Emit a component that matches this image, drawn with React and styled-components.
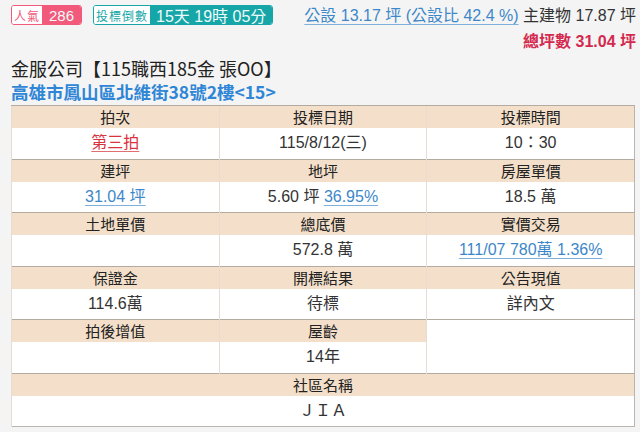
import React from 'react';
import styled, { createGlobalStyle } from "styled-components"

const GlobalStyle = createGlobalStyle`
  html, body {
    margin: 0;
    padding: 0;
    background: #f4f4f4;
  }
  body {
    font-family: "Liberation Sans", "Noto Sans CJK TC", sans-serif;
    color: #333;
  }
`

const rows = [
  {
    heads: ["拍次", "投標日期", "投標時間"],
    values: [{ text: "第三拍", tone: "red" }, { text: "115/8/12(三)" }, { text: "10：30" }],
  },
  {
    heads: ["建坪", "地坪", "房屋單價"],
    values: [
      { text: "31.04 坪", tone: "blue" },
      { text: "5.60 坪 ", link: "36.95%" },
      { text: "18.5 萬" },
    ],
  },
  {
    heads: ["土地單價", "總底價", "實價交易"],
    values: [{ text: "" }, { text: "572.8 萬" }, { text: "111/07 780萬 1.36%", tone: "blue" }],
  },
  {
    heads: ["保證金", "開標結果", "公告現值"],
    values: [{ text: "114.6萬" }, { text: "待標" }, { text: "詳內文" }],
  },
]

function Value({ cell }) {
  if (cell.tone) return <Link tone={cell.tone}>{cell.text}</Link>
  return (
    <>
      {cell.text}
      {cell.link && <Link tone="blue">{cell.link}</Link>}
    </>
  )
}

function App() {
  return (
    <Page>
      <GlobalStyle />
      <TopBar>
        <Badges>
          <Badge color="#f25a7c">
            <BadgeLabel color="#f25a7c">人氣</BadgeLabel>
            <BadgeValue color="#f25a7c">286</BadgeValue>
          </Badge>
          <Badge color="#16a6a8">
            <BadgeLabel color="#16a6a8">投標倒數</BadgeLabel>
            <BadgeValue color="#16a6a8" big>15天 19時 05分</BadgeValue>
          </Badge>
        </Badges>
        <AreaInfo>
          <AreaLine>
            <Link tone="blue">公設 13.17 坪 (公設比 42.4 %)</Link> 主建物 17.87 坪
          </AreaLine>
          <TotalLine>總坪數 31.04 坪</TotalLine>
        </AreaInfo>
      </TopBar>

      <Title>金服公司【115職西185金 張OO】</Title>
      <Address>高雄市鳳山區北維街38號2樓&lt;15&gt;</Address>

      <Table>
        <tbody>
          {rows.map((row, key) => (
            <React.Fragment key={key}>
              <tr>
                {row.heads.map((h) => <HeadCell key={h}>{h}</HeadCell>)}
              </tr>
              <tr>
                {row.values.map((v, i) => (
                  <ValueCell key={i}><Value cell={v} /></ValueCell>
                ))}
              </tr>
            </React.Fragment>
          ))}
          <tr>
            <HeadCell>拍後增值</HeadCell>
            <HeadCell>屋齡</HeadCell>
            <EmptyCell rowSpan={2} />
          </tr>
          <tr>
            <ValueCell></ValueCell>
            <ValueCell>14年</ValueCell>
          </tr>
          <tr>
            <HeadCell colSpan={3}>社區名稱</HeadCell>
          </tr>
          <tr>
            <ValueCell colSpan={3}>ＪＩＡ</ValueCell>
          </tr>
        </tbody>
      </Table>
    </Page>
  );
}

export default App;

const Page = styled.div`
  width: 640px;
  height: 432px;
  padding: 5px 4px 0 11px;
  box-sizing: border-box;
  overflow: hidden;
`

const TopBar = styled.div`
  display: flex;
  justify-content: space-between;
  align-items: flex-start;
`

const Badges = styled.div`
  display: flex;
  gap: 11px;
`

const Badge = styled.div`
  display: flex;
  align-items: stretch;
  height: 20px;
  border: 1px solid ${(p) => p.color};
  border-radius: 3px;
  overflow: hidden;
  box-sizing: border-box;
`

const BadgeLabel = styled.span`
  display: flex;
  align-items: center;
  padding: 0 2px;
  background: #fff;
  color: ${(p) => p.color};
  font-size: 12px;
  font-family: "Noto Sans CJK TC", sans-serif;
  letter-spacing: 1px;
`

const BadgeValue = styled.span`
  display: flex;
  align-items: center;
  padding: 0 ${(p) => (p.big ? "6px" : "7px")};
  background: ${(p) => p.color};
  color: #eefafa;
  font-size: ${(p) => (p.big ? "16px" : "15px")};
  font-family: "Liberation Sans", "Noto Sans CJK TC", sans-serif;
`

const AreaInfo = styled.div`
  display: flex;
  flex-direction: column;
  align-items: flex-end;
  font-size: 16px;
  line-height: 20px;
  padding-top: 1px;
`

const AreaLine = styled.div`
  color: #333;
  white-space: nowrap;
`

const TotalLine = styled.div`
  color: #d4294f;
  font-weight: bold;
  margin-top: 6px;
`

const Link = styled.span`
  color: ${(p) => (p.tone === "red" ? "#d8343f" : "#3d87c9")};
  text-decoration: underline;
  text-decoration-color: ${(p) => (p.tone === "red" ? "#e07070" : "#7fb0dc")};
  text-underline-offset: 3px;
`

const Title = styled.div`
  margin-top: 4px;
  font-size: 18px;
  line-height: 24px;
  color: #222;
  font-family: "Noto Sans CJK TC", sans-serif;
`

const Address = styled.div`
  font-size: 17.5px;
  line-height: 23px;
  color: #2f86d6;
  font-weight: bold;
  font-family: "Noto Sans CJK TC", sans-serif;
`

const Table = styled.table`
  margin-top: 2px;
  width: 624px;
  border-collapse: collapse;
  table-layout: fixed;
  border: 1px solid #bbb5ad;
  background: #fff;
`

const HeadCell = styled.td`
  height: 22px;
  padding: 0;
  background: #f4e0ca;
  color: #222;
  text-align: center;
  border-top: 1px solid #b3aaa0;
  border-left: 1px solid #e6ddd2;
  font-family: "Noto Sans CJK TC", sans-serif;
  font-size: 15px;
  line-height: 22px;
`

const ValueCell = styled.td`
  height: 30.5px;
  padding: 0;
  background: #fff;
  color: #333;
  text-align: center;
  border-left: 1px solid #e6ddd2;
  font-size: 16px;
  line-height: 20px;
`

const EmptyCell = styled.td`
  background: #fff;
  border-top: 1px solid #b3aaa0;
  border-left: 1px solid #e6ddd2;
`
